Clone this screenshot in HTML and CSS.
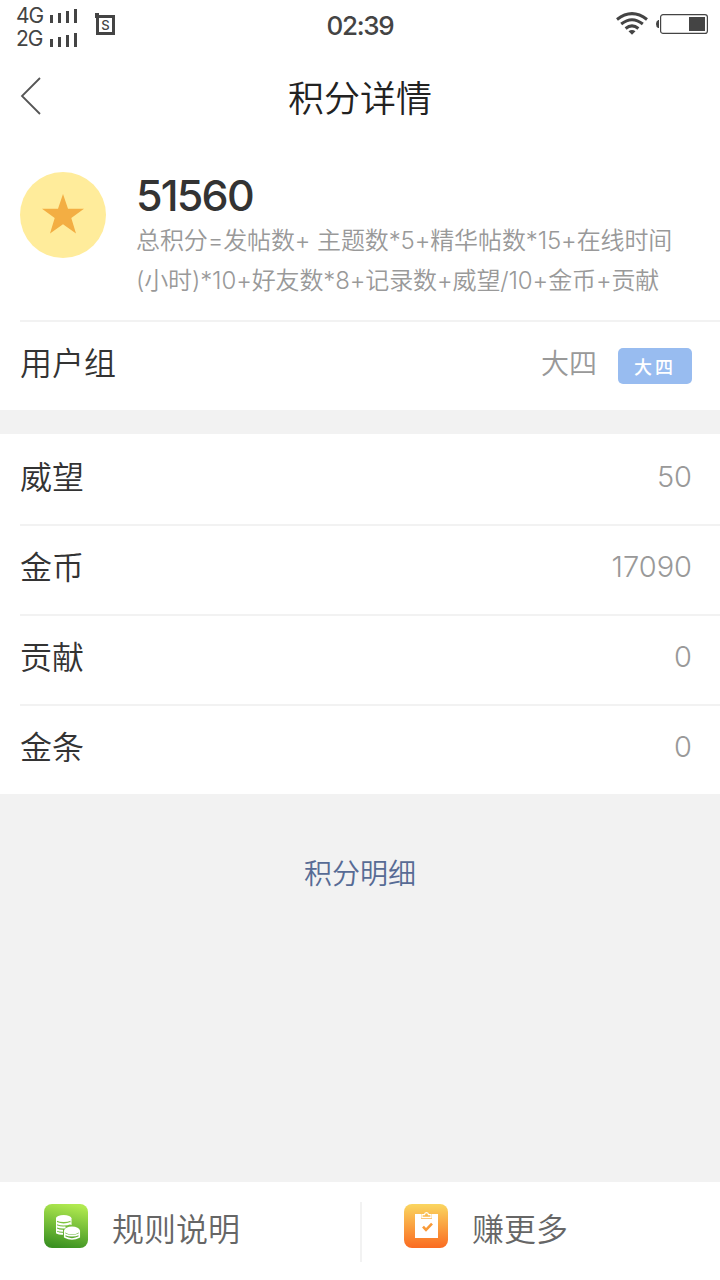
FILE: index.html
```html
<!DOCTYPE html>
<html lang="zh-CN">
<head>
    <meta charset="UTF-8">
    <meta name="viewport" content="width=device-width, initial-scale=1.0">
    <title>积分详情</title>
    <link rel="stylesheet" href="styles.css">
</head>
<body>
    <div class="status-bar">
        <div class="carrier">
            <div class="networks">
                <div class="network">
                    <span>4G</span>
                    <svg width="28" height="15" viewBox="0 0 28 15" fill="#444"><path d="M0 6h3v8H0zM8 4h3v10H8zM16 2h3v12h-3zM24 0h3v14h-3z"/></svg>
                </div>
                <div class="network">
                    <span>2G</span>
                    <svg width="28" height="15" viewBox="0 0 28 15" fill="#444"><path d="M0 7h3v8H0zM8 5h3v10H8zM16 3h3v12h-3zM24 1h3v14h-3z"/></svg>
                </div>
            </div>
            <div class="app-flag">S</div>
        </div>
        <div class="clock">02:39</div>
        <div class="indicators">
            <svg width="32" height="23" viewBox="0 0 32 23" fill="none" stroke="#444" stroke-width="3">
                <path d="M1 7.500Q16-4.200 31 7.500M5.200 12Q16 3.400 26.800 12M9.600 16.500Q16 11.200 22.400 16.500"/>
                <path d="M12.500 19.200Q16 16.600 19.500 19.200L16 22.800z" fill="#444" stroke="none"/>
            </svg>
            <svg width="52" height="20" viewBox="0 0 52 20">
                <path d="M3 6v8H2.200Q0 13 0 10t2.200-4z" fill="#444"/>
                <rect x="4.600" y=".6" width="46.800" height="18.800" rx="2.500" fill="none" stroke="#444" stroke-width="1.200"/>
                <rect x="33" y="3" width="16" height="14" fill="#444"/>
            </svg>
        </div>
    </div>

    <header>
        <a class="back" href="#">
            <svg width="22" height="38" viewBox="0 0 22 38" fill="none" stroke="#555" stroke-width="1.800"><path d="M20 1L2 19l18 18"/></svg>
        </a>
        <h1>积分详情</h1>
    </header>

    <main>
        <section class="summary">
            <div class="medal">
                <svg width="42" height="40" viewBox="0 0 42 40" fill="#f3ae43"><path d="M21 0l5 14.800h16L29.300 24 34 39.500 21 30.200 8 39.500 12.700 24 0 14.800h16z"/></svg>
            </div>
            <div class="total">
                <div class="points">51560</div>
                <p class="formula">总积分=发帖数+ 主题数*5+精华帖数*15+在线时间<br>(小时)*10+好友数*8+记录数+威望/10+金币+贡献</p>
            </div>
        </section>

        <div class="row">
            <span class="label">用户组</span>
            <span class="group-name">大四</span>
            <span class="badge">大四</span>
        </div>

        <section class="credits">
            <div class="row"><span class="label">威望</span><span class="value">50</span></div>
            <div class="row"><span class="label">金币</span><span class="value">17090</span></div>
            <div class="row"><span class="label">贡献</span><span class="value">0</span></div>
            <div class="row"><span class="label">金条</span><span class="value">0</span></div>
        </section>
    </main>

    <a class="detail-link" href="#">积分明细</a>

    <footer>
        <a class="tab" href="#">
            <svg width="44" height="44" viewBox="0 0 44 44">
                <defs>
                    <linearGradient id="green" x1=".4" y1="1" x2=".6" y2="0"><stop offset="0" stop-color="#3b9122"/><stop offset="1" stop-color="#b1ea50"/></linearGradient>
                </defs>
                <rect width="44" height="44" rx="8" fill="url(#green)"/>
                <!-- back stack -->
                <ellipse cx="19.700" cy="14" rx="7.700" ry="3" fill="#fff"/>
                <path d="M12.500 14v15M27 14v7" stroke="#fff" stroke-width="1"/>
                <path d="M12.500 15.500q7.200 3 14.400 0M12.500 19q7.200 3 14.400 0M12.500 22.300q5 1.800 9 1M12.500 25.500q3 1.500 6.500 1.300M12.500 28.500q3 1.500 6.500 1.300" fill="none" stroke="#fff" stroke-width="2"/>
                <!-- front stack -->
                <ellipse cx="28" cy="26.500" rx="7.800" ry="4" fill="#fff"/>
                <path d="M20.500 30q7.500 3.600 15 0M20.700 33q7.300 3.800 14.600 0M20.700 26.500v7M35.300 26.500v7" fill="none" stroke="#fff" stroke-width="1.500"/>
            </svg>
            <span>规则说明</span>
        </a>
        <a class="tab" href="#">
            <svg width="44" height="44" viewBox="0 0 44 44">
                <defs>
                    <linearGradient id="orange" x1="0" y1="1" x2="0" y2="0"><stop offset="0" stop-color="#fa6b21"/><stop offset="1" stop-color="#fad660"/></linearGradient>
                </defs>
                <rect width="44" height="44" rx="8" fill="url(#orange)"/>
                <path d="M11 10h6v4.700h11V10h6v24H11z" fill="#fff"/>
                <path d="M18 13.300v-2.600h2.500q.2-2 2-2t2 2H27v2.600z" fill="none" stroke="#fff" stroke-width="1.300"/>
                <path d="M19 22.700l3 3.200 6-6.300" fill="none" stroke="#f99a38" stroke-width="2.600"/>
            </svg>
            <span>赚更多</span>
        </a>
    </footer>
</body>
</html>
```
FILE: styles.css
```css
:root {
    --bg: #f2f2f2;
    --line: #f2f2f2;
    --text: #333;
    --muted: #999;
    --status: #444;
}

* {
    box-sizing: border-box;
}

body {
    margin: 0;
    min-height: 1280px;
    display: flex;
    flex-direction: column;
    background: var(--bg);
    color: var(--text);
    font-family: Inter, "Noto Sans CJK SC", sans-serif;
    font-weight: 350;
}

a {
    color: inherit;
    text-decoration: none;
}

svg {
    display: block;
    flex: none;
}

.status-bar {
    height: 50px;
    padding: 4px 12px 0;
    display: grid;
    grid-template-columns: 1fr auto 1fr;
    background: #fff;
    color: var(--status);
}

.carrier {
    display: flex;
    padding-left: 4px;
}

.networks {
    width: 80px;
}

.network {
    display: flex;
    align-items: center;
    height: 23px;
    font-size: 21px;
    font-weight: 400;
    letter-spacing: -1px;
}

.network span {
    width: 34px;
}

.network svg {
    margin-top: 2px;
}

.app-flag {
    width: 19px;
    height: 20px;
    margin-top: 11px;
    border: 3px solid var(--status);
    font-size: 13px;
    font-weight: 500;
    line-height: 14px;
    text-align: center;
    position: relative;
}

.app-flag::before {
    content: '';
    position: absolute;
    left: -4px;
    top: -5px;
    width: 4px;
    height: 5px;
    background: var(--status);
}

.clock {
    font-size: 26px;
    font-weight: 450;
    line-height: 44px;
    letter-spacing: -1.3px;
}

.indicators {
    display: flex;
    justify-content: flex-end;
    gap: 8px;
    padding-top: 8px;
}

.indicators svg:last-child {
    margin-top: 2px;
}

header {
    height: 96px;
    padding: 0 20px;
    display: grid;
    grid-template-columns: 1fr auto 1fr;
    align-items: center;
    background: #fff;
}

.back {
    padding-bottom: 5px;
}

h1 {
    margin: 0;
    padding-top: 1px;
    color: #222;
    font-size: 36px;
    font-weight: 350;
    line-height: 48px;
}

main {
    background: #fff;
}

.summary {
    height: 174px;
    padding: 26px 0 0 20px;
    display: flex;
    gap: 31px;
}

.medal {
    flex: none;
    width: 86px;
    height: 86px;
    padding-bottom: 3px;
    display: flex;
    align-items: center;
    justify-content: center;
    border-radius: 50%;
    background: #ffec9b;
}

.points {
    margin: -1px 0 0 -1px;
    font-size: 43px;
    font-weight: 550;
    line-height: 48px;
    letter-spacing: -1.8px;
}

.formula {
    margin: 2px 0 0 -1px;
    color: var(--muted);
    font-size: 24px;
    line-height: 40px;
    letter-spacing: -0.12px;
    white-space: nowrap;
}

.row {
    height: 90px;
    margin-left: 20px;
    padding-right: 28px;
    display: flex;
    align-items: center;
    border-top: 2px solid var(--line);
}

.label {
    flex: 1;
    padding-bottom: 4px;
    font-size: 32px;
    line-height: 48px;
}

.group-name {
    margin-right: 21px;
    padding-bottom: 4px;
    color: var(--muted);
    font-size: 28px;
    line-height: 40px;
}

.badge {
    width: 74px;
    height: 36px;
    padding-top: 2px;
    border-radius: 5px;
    background: #98bcf0;
    color: #fff;
    font-size: 18px;
    font-weight: 500;
    line-height: 36px;
    letter-spacing: 3px;
    text-align: center;
}

.value {
    padding-bottom: 6px;
    color: var(--muted);
    font-size: 29px;
    font-weight: 300;
    line-height: 40px;
}

.credits {
    border-top: 24px solid var(--bg);
}

.credits .row:first-child {
    border-top-color: #fff;
}

.detail-link {
    margin-top: 60px;
    color: #576b95;
    font-size: 28px;
    line-height: 40px;
    text-align: center;
}

footer {
    height: 98px;
    margin-top: auto;
    display: grid;
    grid-template-columns: 1fr 1fr;
    padding-top: 20px;
    background: #fff;
}

.tab {
    height: 60px;
    padding-left: 44px;
    display: flex;
    gap: 24px;
    color: #666;
    font-size: 32px;
    line-height: 56px;
}

.tab svg {
    margin-top: 2px;
}

.tab + .tab {
    padding-left: 42px;
    border-left: 2px solid var(--line);
}
```
